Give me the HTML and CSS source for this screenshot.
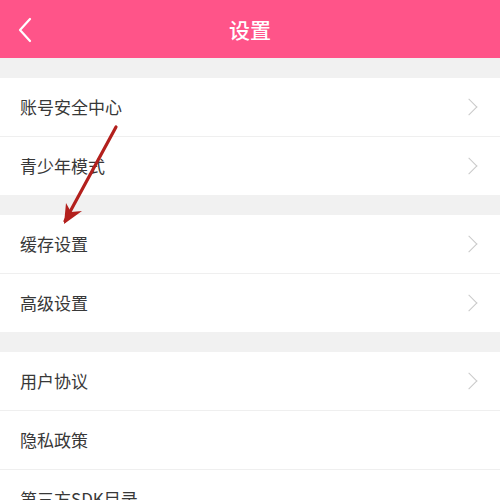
FILE: index.html
```html
<!DOCTYPE html>
<html lang="zh">
<head>
<meta charset="utf-8">
<link rel="stylesheet" href="styles.css">
</head>
<body>
<div class="page">
  <header class="topbar">
    <svg class="back" width="16" height="26" viewBox="0 0 16 26"><path d="M13 2 L3 13 L13 24" fill="none" stroke="#fff" stroke-width="2.2" stroke-linecap="round" stroke-linejoin="round"/></svg>
    <h1 class="title">设置</h1>
  </header>
  <div class="gap"></div>
  <section class="group">
    <div class="row"><span>账号安全中心</span><i class="chev"></i></div>
    <div class="row"><span>青少年模式</span><i class="chev"></i></div>
  </section>
  <div class="gap"></div>
  <section class="group">
    <div class="row"><span>缓存设置</span><i class="chev"></i></div>
    <div class="row"><span>高级设置</span><i class="chev"></i></div>
  </section>
  <div class="gap"></div>
  <section class="group">
    <div class="row"><span>用户协议</span><i class="chev"></i></div>
    <div class="row"><span>隐私政策</span></div>
    <div class="row"><span>第三方SDK目录</span></div>
  </section>
  <svg class="annot" width="500" height="500" viewBox="0 0 500 500">
    <path d="M116 127 L65 221" stroke="#b3201d" stroke-width="3.2" stroke-linecap="round" fill="none"/>
    <path d="M64 224 L66 203 L71 212 L82 211 Z" fill="#b3201d"/>
  </svg>
</div>
</body>
</html>
```
FILE: styles.css
```css
html, body { margin: 0; padding: 0; }
body {
  width: 500px; height: 500px; overflow: hidden;
  background: #f1f1f1;
  font-family: "Noto Sans CJK SC", "Noto Sans", sans-serif;
}
.page { position: relative; width: 500px; }
.topbar {
  height: 58px; background: #ff5489;
  display: flex; align-items: center; justify-content: center;
  position: relative;
}
.back { position: absolute; left: 17px; top: 17px; }
.title {
  margin: 0; color: #fff; font-size: 21px; font-weight: 500; line-height: 1;
}
.gap { height: 20px; background: #f1f1f1; }
.group { background: #fff; }
.row {
  height: 58px; display: flex; align-items: center; justify-content: space-between;
  padding: 0 20px; border-bottom: 1px solid #efefef;
  font-size: 17px; color: #383838; line-height: 1;
}
.row span { margin-top: -2px; }
.row:last-child { border-bottom: none; }
.chev {
  width: 11px; height: 11px; margin-right: 5px;
  border-top: 1.5px solid #cacaca; border-right: 1.5px solid #cacaca;
  transform: rotate(45deg);
}
.annot { position: absolute; left: 0; top: 0; pointer-events: none; }
```
